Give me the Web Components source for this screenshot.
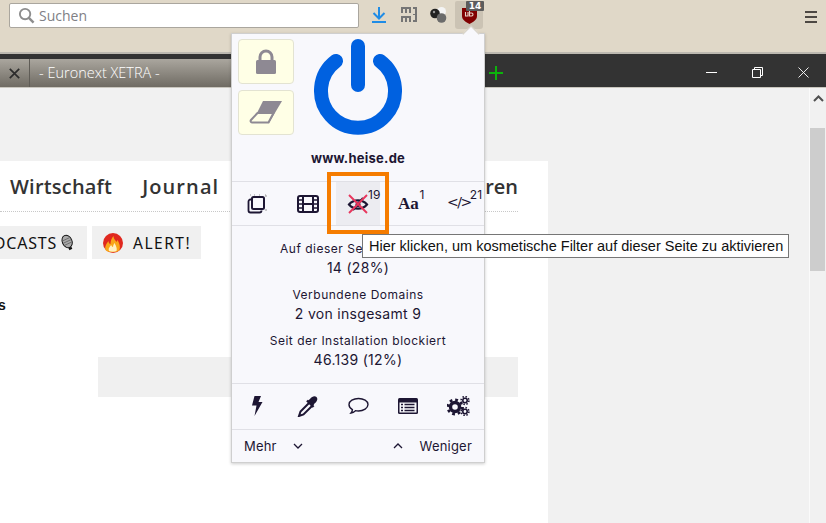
<!DOCTYPE html>
<html lang="de">
<head>
<meta charset="utf-8">
<title>uBlock popup</title>
<style>
html,body{margin:0;padding:0;}
body{position:relative;width:826px;height:523px;overflow:hidden;display:flex;flex-direction:column;font-family:"Liberation Sans",sans-serif;background:#f1f1f1;}
svg{display:block;}
</style>
</head>
<body>
<browser-toolbar></browser-toolbar>
<tab-strip></tab-strip>
<page-view></page-view>
<ublock-popup></ublock-popup>
<focus-ring></focus-ring>
<hover-tip>Hier klicken, um kosmetische Filter auf dieser Seite zu aktivieren</hover-tip>

<script>
class BrowserToolbar extends HTMLElement{
    constructor(){
        super()
        this.attachShadow({mode:'open'});
        this.shadowRoot.innerHTML = `
        <style>
            :host{display:flex;align-items:flex-start;height:52px;flex:none;background:#e0d8c8;border-bottom:2px solid #bdb9b1;}
            .search{display:flex;align-items:center;gap:4px;box-sizing:border-box;margin:3px 0 0 9px;width:350px;height:25px;padding-left:8px;background:#fff;border:1px solid #aaa69e;border-radius:2px;font:14px "Open Sans",sans-serif;color:#808085;}
            .btn{display:flex;align-items:center;justify-content:center;height:30px;}
            .dl{margin-left:10px;width:20px;}
            .mj{margin-left:11px;width:18px;}
            .balls{margin-left:11px;width:18px;}
            .ub{position:relative;margin:1px 0 0 8px;width:28px;height:28px;background:#cbc3b4;border-radius:2px 2px 3px 3px;}
            .badge{position:absolute;top:0;right:-1px;width:18px;height:10px;background:#5c5c5c;color:#fff;font:bold 9px/10px "DejaVu Sans",sans-serif;text-align:center;border-radius:1px;}
            .menu{margin:9px 0 0 auto;margin-right:9px;}
        </style>
        <div class="search">
            <svg width="17" height="17" viewBox="0 0 18 18" fill="none" stroke="#8d8d8d"><circle cx="7.500" cy="7.500" r="5.500" stroke-width="2"/><path d="M11.500 11.500l5 5" stroke-width="2.600"/></svg>
            <span>Suchen</span>
        </div>
        <div class="btn dl"><svg width="14" height="16" viewBox="0 0 14 16" fill="none" stroke="#1f8ce6" stroke-width="2"><path d="M7 0v11M1.500 6l5.500 5.500L12.500 6M0 15h14"/></svg></div>
        <div class="btn mj"><svg width="16" height="16" viewBox="0 0 16 16" fill="#757575"><path d="M0 0h10v6H8V2H6v4H4V2H2v4H0zM0 9h10v6H8v-4H6v4H4v-4H2v4H0zM12 0h4v15h-4v-2h2V8h-2V7h2V2h-2z"/></svg></div>
        <div class="btn balls"><svg width="17" height="16" viewBox="0 0 17 16"><circle cx="11.500" cy="4.500" r="4.500" fill="#f4f4f4"/><circle cx="5" cy="6.500" r="4.800" fill="#222"/><circle cx="11.500" cy="11" r="4.800" fill="#6b6b6b"/><circle cx="4" cy="5" r="1.200" fill="#999"/></svg></div>
        <div class="btn ub">
            <svg width="15" height="17" viewBox="0 0 15 17"><path d="M0 1h15v8c0 4-4 6-7.500 8C4 15 0 13 0 9z" fill="#800000"/><path d="M3.500 5v4h2.500V5M7.500 4v5h2c2 0 2-3 0-3h-2" fill="none" stroke="#e8d4c8" stroke-width="1.100"/></svg>
            <div class="badge">14</div>
        </div>
        <div class="menu"><svg width="12" height="12" viewBox="0 0 12 12" fill="#4d4843"><rect width="12" height="2"/><rect y="5" width="12" height="2"/><rect y="10" width="12" height="2"/></svg></div>
        `;
    }
}
window.customElements.define('browser-toolbar', BrowserToolbar);

class TabStrip extends HTMLElement{
    constructor(){
        super()
        this.attachShadow({mode:'open'});
        this.shadowRoot.innerHTML = `
        <style>
            :host{display:flex;flex:none;height:33px;background:#333;border-bottom:1px solid #c9c6be;}
            .tabs{display:flex;width:485px;flex:none;margin-top:5px;background:linear-gradient(#aaa69e,#6f6b63);}
            .x{display:flex;align-items:center;justify-content:center;width:30px;box-sizing:border-box;border-right:1px solid #5f5c56;}
            .title{padding:1px 0 0 9px;font:300 14.500px/26px "Open Sans",sans-serif;color:#fff;white-space:pre;}
            .plus{margin:12px 0 0 4px;}
            .ctl{display:flex;margin-left:auto;}
            .ctl div{display:flex;align-items:center;justify-content:center;box-sizing:border-box;width:46px;height:33px;padding-top:3px;}
        </style>
        <div class="tabs">
            <div class="x"><svg width="11" height="11" viewBox="0 0 11 11" stroke="#2c2c2c" stroke-width="1.700"><path d="M.8.8l9.400 9.400M10.200.8L.8 10.200"/></svg></div>
            <div class="title">- Euronext XETRA -</div>
        </div>
        <div class="plus"><svg width="14" height="14" viewBox="0 0 14 14" fill="#0cb30c"><rect x="6" width="2" height="14"/><rect y="6" width="14" height="2"/></svg></div>
        <div class="ctl">
            <div><svg width="11" height="11" viewBox="0 0 11 11" stroke="#fff"><path d="M0 5.500h11"/></svg></div>
            <div><svg width="11" height="11" viewBox="0 0 11 11" fill="none" stroke="#fff"><path d="M.5 2.500h8v8h-8zM2.500 2.500v-2h8v8h-2"/></svg></div>
            <div><svg width="11" height="11" viewBox="0 0 11 11" stroke="#fff" stroke-width=".9"><path d="M.5.500l10 10M10.500.500l-10 10"/></svg></div>
        </div>
        `;
    }
}
window.customElements.define('tab-strip', TabStrip);

class PageView extends HTMLElement{
    constructor(){
        super()
        this.attachShadow({mode:'open'});
        this.shadowRoot.innerHTML = `
        <style>
            :host{display:flex;flex:1;min-height:0;background:#f1f1f1;overflow:hidden;}
            .main{flex:1;min-width:0;padding-top:73px;}
            .article{width:548px;height:362px;background:#fff;box-sizing:border-box;overflow:hidden;}
            nav{display:flex;width:518px;height:51px;box-sizing:border-box;padding:13px 0 0 10px;border-bottom:1px dotted #c8c8c8;font:600 20px/26px "Open Sans",sans-serif;color:#333;}
            nav span:nth-child(1){letter-spacing:.2px;}
            nav span:nth-child(2){margin-left:30px;letter-spacing:1.100px;}
            nav span:nth-child(3){margin-left:auto;}
            .pills{display:flex;gap:5px;margin:14px 0 0 -30px;}
            .pill{display:flex;align-items:center;height:33px;background:#f0f0f0;font:16px "Noto Sans",sans-serif;letter-spacing:.8px;color:#111;}
            .a{width:117px;padding-right:13px;box-sizing:border-box;gap:4px;justify-content:flex-end;}
            .b{width:109px;padding-left:11px;box-sizing:border-box;gap:10px;letter-spacing:1.500px;font-size:15.500px;}
            .s{margin:37px 0 0 -2px;font:bold 14px/18px "Liberation Sans",sans-serif;color:#111;}
            .box{width:420px;height:40px;margin:43px 0 0 98px;background:#f0f0f0;}
            .bar{position:relative;flex:none;width:17px;box-sizing:border-box;border-left:1px solid #fafafa;background:#f1f1f1;}
            .up{margin:7px 0 0 3px;}
            .thumb{width:15px;height:143px;margin-top:22px;background:#cdcdcd;}
        </style>
        <div class="main">
            <div class="article">
                <nav><span>Wirtschaft</span><span>Journal</span><span>Touren</span></nav>
                <div class="pills">
                    <div class="pill a">PODCASTS
                        <svg width="16" height="20" viewBox="0 0 16 20"><g transform="rotate(-25 8 9)"><ellipse cx="8" cy="8" rx="6" ry="8" fill="#aaa" stroke="#111" stroke-width="1.200"/><path d="M3 5h10M2.500 8h11M3 11h10" stroke="#666"/><path d="M6 16h4v3H6z" fill="#111"/></g></svg>
                    </div>
                    <div class="pill b">
                        <svg width="20" height="20" viewBox="0 0 20 20"><circle cx="10" cy="10" r="10" fill="#e0281f"/><path d="M2.500 17c-1-4 1-6 3-9 0 2 1 3 2 3 0-3 1-6 3-8 0 3 2 4 3 6l1-2c2 3 3 7 2 10-2 3-12 3-14 0z" fill="#f9a61a"/><path d="M6 18c-1-3 1-4 2-6 1 1 1 2 2 2 0-2 1-3 1.500-4 1 2 3 5 2 8-2 1-5 1-7.500 0z" fill="#fff1c4"/></svg>
                        <span>ALERT!</span>
                    </div>
                </div>
                <div class="s">s</div>
                <div class="box"></div>
            </div>
        </div>
        <div class="bar">
            <svg class="up" width="11" height="7" viewBox="0 0 11 7" fill="none" stroke="#505050" stroke-width="2"><path d="M1 6l4.500-4.500L10 6"/></svg>
            <div class="thumb"></div>
        </div>
        `;
    }
}
window.customElements.define('page-view', PageView);

class UbToolCell extends HTMLElement{
    constructor(){
        super()
        const count = this.getAttribute('count') || '';
        this.attachShadow({mode:'open'});
        this.shadowRoot.innerHTML = `
        <style>
            :host{display:flex;justify-content:center;flex:1;}
            .cell{position:relative;display:flex;align-items:center;justify-content:center;width:44px;height:43px;}
            :host([active]) .cell{background:#ececf1;}
            sup{position:absolute;left:calc(50% + var(--sup,10px));top:6px;font:12px/14px "Inter",sans-serif;color:#1d1633;}
        </style>
        <div class="cell"><slot></slot>${count ? `<sup>${count}</sup>` : ''}</div>
        `;
    }
}
window.customElements.define('ub-tool-cell', UbToolCell);

class UbStat extends HTMLElement{
    constructor(){
        super()
        this.attachShadow({mode:'open'});
        this.shadowRoot.innerHTML = `
        <style>
            :host{display:block;height:46px;text-align:center;color:#1d1633;}
            .l{font:12px/18px "Inter",sans-serif;letter-spacing:.5px;}
            .v{font:14px/20px "Inter",sans-serif;letter-spacing:.3px;}
        </style>
        <div class="l">${this.getAttribute('label')}</div>
        <div class="v">${this.getAttribute('value')}</div>
        `;
    }
}
window.customElements.define('ub-stat', UbStat);

class UblockPopup extends HTMLElement{
    constructor(){
        super()
        this.attachShadow({mode:'open'});
        this.shadowRoot.innerHTML = `
        <style>
            :host{position:absolute;left:231px;top:33px;width:252px;height:428px;display:flex;flex-direction:column;background:#f8f8fc;border:1px solid #cfcfcf;box-shadow:0 1px 3px rgba(0,0,0,.2);color:#1d1633;}
            .arrow{position:absolute;top:-6px;right:7px;width:11px;height:11px;background:#f8f8fc;transform:rotate(45deg);border-left:1px solid #d5d0c4;border-top:1px solid #d5d0c4;}
            .head{position:relative;display:flex;flex-direction:column;align-items:center;height:147px;flex:none;border-bottom:1px solid #e0e0e6;}
            .side{position:absolute;left:6px;top:5px;display:flex;flex-direction:column;gap:6px;}
            .side div{display:flex;align-items:center;justify-content:center;width:54px;height:43px;background:#ffffe6;border:1px solid #e3e3d2;border-radius:4px;}
            .power{margin-top:5px;}
            .host{margin-top:14px;font:bold 13px/18px "Inter",sans-serif;letter-spacing:.25px;}
            .tools{display:flex;height:43px;flex:none;border-bottom:1px solid #e0e0e6;}
            .stats{height:158px;flex:none;padding-top:14px;box-sizing:border-box;border-bottom:1px solid #e0e0e6;}
            .acts{display:flex;align-items:center;justify-content:space-around;box-sizing:border-box;height:46px;flex:none;padding-bottom:1px;border-bottom:1px solid #e0e0e6;}
            .acts div{display:flex;justify-content:center;flex:1;}
            .more{display:flex;align-items:center;flex:1;padding:0 12px;font:13px "Inter",sans-serif;letter-spacing:.2px;}
            .more svg{margin-left:16px;}
            .more .r{margin-left:auto;display:flex;align-items:center;gap:17px;}
            .more .r svg{margin:0;}
            .aa{font:bold 17px "Liberation Serif",serif;color:#1d1633;}
            .code{font:14px "DejaVu Sans",sans-serif;letter-spacing:-1.500px;color:#1d1633;padding-bottom:3px;}
        </style>
        <div class="arrow"></div>
        <div class="head">
            <div class="side">
                <div><svg width="22" height="26" viewBox="0 0 22 26"><path d="M5 12V8a6 6 0 0 1 12 0v4" fill="none" stroke="#8e8993" stroke-width="3"/><rect x="1" y="11" width="20" height="14" rx="1.500" fill="#8e8993"/></svg></div>
                <div><svg width="34" height="23" viewBox="0 0 34 23"><path d="M14 0h19l-13 22H3z" fill="#8e8993"/><path d="M8.500 12h16l-5 9.500H3a1.500 1.500 0 0 1-1-2.500z" fill="#ffffe6" stroke="#8e8993" stroke-width="2" stroke-linejoin="round"/></svg></div>
            </div>
            <svg class="power" width="90" height="96" viewBox="0 0 90 96" fill="none" stroke="#0061e0" stroke-width="14" stroke-linecap="round"><path d="M45 7v39"/><path d="M23 22a37 37 0 1 0 44 0" /></svg>
            <div class="host">www.heise.de</div>
        </div>
        <div class="tools">
            <ub-tool-cell>
                <svg width="20" height="20" viewBox="0 0 20 20" fill="none" stroke="#1d1633" stroke-width="1.600"><rect x="5" y="3" width="12" height="12" rx="1.500" stroke-width="2"/><path d="M5 5.500H3.500A2 2 0 0 0 1.500 7.500v9a2 2 0 0 0 2 2h9a2 2 0 0 0 2-2V17" stroke-width="1.800"/><path d="M3 1h1M18 1h1v2M19 15v2M7 1h1M12 1h1" stroke="#999" stroke-width="1"/></svg>
            </ub-tool-cell>
            <ub-tool-cell>
                <svg width="22" height="18" viewBox="0 0 22 18" fill="none" stroke="#1d1633" stroke-width="2"><rect x="1" y="1" width="20" height="16" rx="2"/><path d="M6 1v16M16 1v16M6 9h10"/><path d="M1 5h5M1 9h5M1 13h5M16 5h5M16 9h5M16 13h5" stroke-width="1.400"/></svg>
            </ub-tool-cell>
            <ub-tool-cell active count="19">
                <svg width="22" height="20" viewBox="0 0 22 20" fill="none"><path d="M2 10.500c4.500-5.500 13.500-5.500 18 0-4.500 5.500-13.500 5.500-18 0z" stroke="#1d1633" stroke-width="2.200"/><circle cx="11" cy="10.500" r="2.500" fill="#1d1633"/><path d="M6 16L16 4" stroke="#1d1633" stroke-width="2"/><path d="M2 1l18 18M20 1L2 19" stroke="#e8365d" stroke-width="1.900"/></svg>
            </ub-tool-cell>
            <ub-tool-cell count="1" style="--sup:11px"><span class="aa">Aa</span></ub-tool-cell>
            <ub-tool-cell count="21" style="--sup:11px"><span class="code">&lt;/&gt;</span></ub-tool-cell>
        </div>
        <div class="stats">
            <ub-stat label="Auf dieser Seite blockiert" value="14 (28%)"></ub-stat>
            <ub-stat label="Verbundene Domains" value="2 von insgesamt 9"></ub-stat>
            <ub-stat label="Seit der Installation blockiert" value="46.139 (12%)"></ub-stat>
        </div>
        <div class="acts">
            <div><svg width="12" height="20" viewBox="0 0 12 20" fill="#1d1633"><path d="M3.500 0h6.500L7.500 6H11.500L3.500 20l2-10.500H1z"/></svg></div>
            <div><svg width="21" height="21" viewBox="0 0 21 21"><path d="M11 4.500L13 3c2-3 5-3.500 6.500-2s1 4.500-2 6.500L16 10z" fill="#1d1633"/><path d="M12 7L3.500 15.500 2 20l4.500-1.500L15 10" fill="#f8f8fc" stroke="#1d1633" stroke-width="2"/><path d="M10 4.500l6.500 6.500" stroke="#1d1633" stroke-width="2.400"/></svg></div>
            <div><svg width="21" height="18" viewBox="0 0 21 18" fill="none" stroke="#1d1633" stroke-width="1.400"><path d="M10.500 1.500c5 0 9.500 2.500 9.500 6s-4.500 6.500-9.500 6.500c-1 0-2 0-3-.3-1.500 1.300-2.800 2-4.500 2.300.8-1 1.300-2 1.400-3.300C2.400 11.500 1 9.700 1 7.500c0-3.500 4.500-6 9.500-6z"/></svg></div>
            <div><svg width="20" height="16" viewBox="0 0 20 16"><rect width="20" height="16" rx="1.500" fill="#1d1633"/><rect x="1.500" y="4.500" width="17" height="10" fill="#f8f8fc"/><path d="M3 6.500h2M3 9.500h2M3 12.500h2M6.500 6.500h10M6.500 9.500h10M6.500 12.500h10" stroke="#1d1633" stroke-width="1.500"/></svg></div>
            <div><svg width="23" height="20" viewBox="0 0 23 20" fill="none" stroke="#1d1633"><circle cx="8" cy="11" r="4.500" stroke-width="3.400"/><circle cx="8" cy="11" r="7.200" stroke-width="2.600" stroke-dasharray="2.800 2.850"/><circle cx="18" cy="4.500" r="2.200" stroke-width="1.600"/><circle cx="18" cy="4.500" r="3.900" stroke-width="1.600" stroke-dasharray="1.500 1.560"/><circle cx="18" cy="15.500" r="2.200" stroke-width="1.600"/><circle cx="18" cy="15.500" r="3.900" stroke-width="1.600" stroke-dasharray="1.500 1.560"/></svg></div>
        </div>
        <div class="more">
            <span>Mehr</span>
            <svg width="10" height="6" viewBox="0 0 10 6" fill="none" stroke="#1d1633" stroke-width="1.300"><path d="M1 1l4 4 4-4"/></svg>
            <div class="r">
                <svg width="10" height="6" viewBox="0 0 10 6" fill="none" stroke="#1d1633" stroke-width="1.300"><path d="M1 5l4-4 4 4"/></svg>
                <span>Weniger</span>
            </div>
        </div>
        `;
    }
}
window.customElements.define('ublock-popup', UblockPopup);

class FocusRing extends HTMLElement{
    constructor(){
        super()
        this.attachShadow({mode:'open'});
        this.shadowRoot.innerHTML = `
        <style>
            :host{position:absolute;left:327px;top:172px;width:62px;height:62px;box-sizing:border-box;border:4px solid #f57c00;}
        </style>
        `;
    }
}
window.customElements.define('focus-ring', FocusRing);

class HoverTip extends HTMLElement{
    constructor(){
        super()
        this.attachShadow({mode:'open'});
        this.shadowRoot.innerHTML = `
        <style>
            :host{position:absolute;left:362px;top:234px;width:427px;height:24px;box-sizing:border-box;padding-left:6px;background:#fff;border:1px solid #767676;font:14.500px/22px "Liberation Sans",sans-serif;color:#111;white-space:nowrap;}
        </style>
        <slot></slot>
        `;
    }
}
window.customElements.define('hover-tip', HoverTip);
</script>
</body>
</html>
